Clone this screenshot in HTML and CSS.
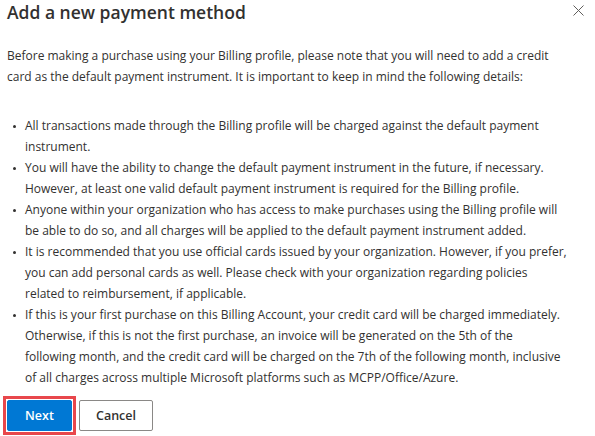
FILE: index.html
```html
<!DOCTYPE html>
<html lang="en">
<head>
<meta charset="utf-8">
<title>Add a new payment method</title>
<link rel="stylesheet" href="styles.css">
</head>
<body>
<div class="dialog">
  <div class="header">
    <h1 class="title">Add a new payment method</h1>
    <button class="close" aria-label="Close">
      <svg width="11" height="11" viewBox="0 0 11 11"><path d="M0.5 0.5 L10.5 10.5 M10.5 0.5 L0.5 10.5" stroke="#605e5c" stroke-width="1" fill="none"/></svg>
    </button>
  </div>
  <p class="intro">Before making a purchase using your Billing profile, please note that you will need to add a credit<br>card as the default payment instrument. It is important to keep in mind the following details:</p>
  <ul class="list">
    <li>All transactions made through the Billing profile will be charged against the default payment<br>instrument.</li>
    <li>You will have the ability to change the default payment instrument in the future, if necessary.<br>However, at least one valid default payment instrument is required for the Billing profile.</li>
    <li>Anyone within your organization who has access to make purchases using the Billing profile will<br>be able to do so, and all charges will be applied to the default payment instrument added.</li>
    <li>It is recommended that you use official cards issued by your organization. However, if you prefer,<br>you can add personal cards as well. Please check with your organization regarding policies<br>related to reimbursement, if applicable.</li>
    <li>If this is your first purchase on this Billing Account, your credit card will be charged immediately.<br>Otherwise, if this is not the first purchase, an invoice will be generated on the 5th of the<br>following month, and the credit card will be charged on the 7th of the following month, inclusive<br>of all charges across multiple Microsoft platforms such as MCPP/Office/Azure.</li>
  </ul>
  <div class="footer">
    <div class="highlight"><button class="btn btn-primary">Next</button></div>
    <button class="btn btn-default">Cancel</button>
  </div>
</div>
</body>
</html>
```

FILE: styles.css
```css
html, body {
  margin: 0;
  padding: 0;
  background: #ffffff;
}
body {
  font-family: "Open Sans", "Noto Sans", sans-serif;
  color: #323130;
  width: 595px;
  height: 436px;
  overflow: hidden;
}
.dialog {
  padding: 0 4px 0 7px;
}
.header {
  display: flex;
  justify-content: space-between;
  align-items: flex-start;
}
.title {
  margin: 0;
  font-size: 17.5px;
  line-height: 24px;
  font-weight: 600;
  color: #323130;
}
.close {
  margin: 5px 7px 0 0;
  padding: 0;
  border: none;
  background: transparent;
  width: 11px;
  height: 11px;
  display: flex;
}
.intro {
  margin: 21px 0 0 0;
  font-size: 12px;
  line-height: 21px;
  white-space: nowrap;
}
.list {
  list-style: none;
  margin: 28px 0 0 0;
  padding: 0;
  font-size: 12px;
  line-height: 21px;
  white-space: nowrap;
}
.list li {
  display: flex;
}
.list li::before {
  content: "";
  flex: none;
  width: 3px;
  height: 3px;
  border-radius: 50%;
  background: #323130;
  margin: 10px 9px 0 6px;
}
.footer {
  display: flex;
  align-items: center;
  gap: 3px;
  margin: 8px 0 0 -4px;
}
.highlight {
  border: 3px solid #e8474c;
  padding: 1px;
  display: flex;
}
.btn {
  font-family: "Open Sans", "Noto Sans", sans-serif;
  font-size: 12.5px;
  font-weight: 600;
  height: 31px;
  border-radius: 2px;
  padding: 0;
  cursor: pointer;
}
.btn-primary {
  width: 65px;
  background: #0078d4;
  border: 1px solid #0078d4;
  color: #ffffff;
}
.btn-default {
  width: 74px;
  background: #ffffff;
  border: 1px solid #8a8886;
  color: #323130;
}
```
